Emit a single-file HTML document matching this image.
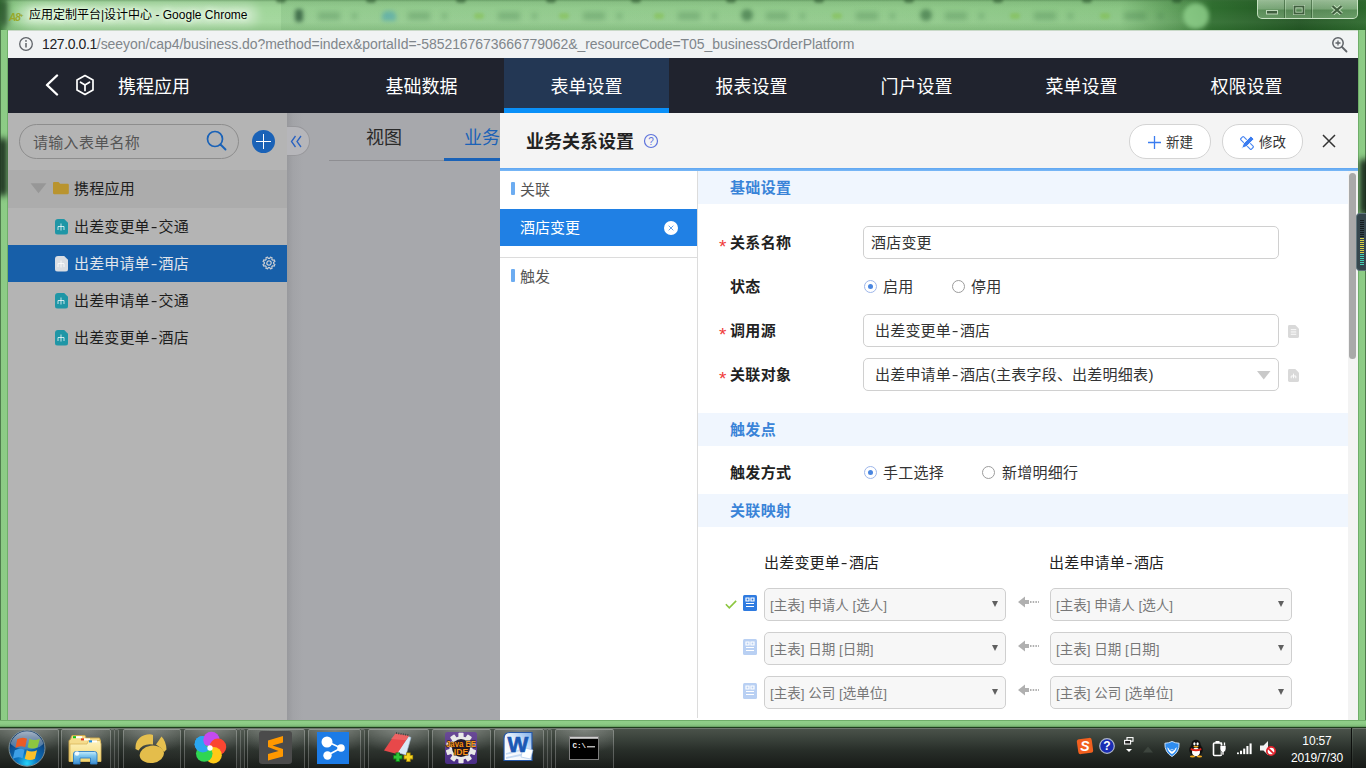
<!DOCTYPE html>
<html lang="zh-CN">
<head>
<meta charset="utf-8">
<title>应用定制平台|设计中心</title>
<style>
*{box-sizing:border-box;margin:0;padding:0}
html,body{width:1366px;height:768px;overflow:hidden}
body{position:relative;background:#8fcc88;font-family:"Liberation Sans","Noto Sans CJK SC",sans-serif;color:#222;font-size:14px}
.abs{position:absolute}
/* ---------- window frame ---------- */
#titlebar{left:0;top:0;width:1366px;height:30px;background:linear-gradient(180deg,rgba(60,110,60,.45) 0,rgba(60,110,60,.12) 2px,rgba(255,255,255,0) 8px,rgba(255,255,255,.06) 22px,rgba(40,90,40,.12) 30px),linear-gradient(90deg,#3f7a3d 0,#8cc986 8px,#a2d89c 40px,#a0d69a 260px,#98d091 900px,#90cb89 1120px,#5d9c59 1180px,#2f6e2f 1212px,#1f5220 1300px,#2c682c 1366px);overflow:hidden}
#titlebar .bl{position:absolute;filter:blur(2.500px);background:rgba(35,95,50,.24)}
#wc{left:1257px;top:0;width:101px;height:19px;border:1px solid rgba(215,240,210,.8);border-top:0;border-radius:0 0 5px 5px;background:linear-gradient(180deg,rgba(225,248,220,.6) 0,rgba(205,238,200,.5) 9px,rgba(160,205,155,.42) 10px,rgba(175,220,170,.45) 19px)}
#wc i{position:absolute;top:0;width:1px;height:18px;background:rgba(40,80,40,.55);box-shadow:1px 0 0 rgba(210,240,205,.4)}
#titlebar .ttl{left:29px;top:7px;font-size:12px;line-height:16px;color:#000;white-space:nowrap;text-shadow:0 0 6px #e8ffe5,0 0 6px #e8ffe5,0 0 3px #e8ffe5}
#frameL{left:0;top:30px;width:8px;height:698px;background:linear-gradient(90deg,#4f7c4d 0,#4f7c4d 1px,#8ccb85 1.500px,#8dcc86 6.500px,#6fae69 7px,#6fae69 8px)}
#frameR{left:1358px;top:30px;width:8px;height:698px;background:linear-gradient(90deg,#6fae69 0,#6fae69 1px,#8ccb85 1.500px,#8dcc86 6.500px,#4f7c4d 7px,#4f7c4d 8px)}
#frameB{left:0;top:720px;width:1366px;height:8px;background:linear-gradient(180deg,#6fae69 0,#6fae69 1px,#8fce88 1.500px,#8ccb85 4px,#7dba77 6px,#5a9256 7px,#1f3c1d 7.300px,#1f3c1d 8px)}
#urlbar{left:8px;top:30px;width:1350px;height:28px;background:#f1f3f4;border-top:1px solid #c9d9c8}
#urlbar .u{left:34px;top:5px;font-size:14px;line-height:16px;color:#80868b;white-space:nowrap;letter-spacing:-0.052px}
#urlbar .u b{font-weight:400;color:#202124;letter-spacing:-.4px}
/* ---------- app ---------- */
#nav{left:8px;top:58px;width:1350px;height:55px;background:#20232e;z-index:5}
#nav .it{top:0;height:55px;width:165px;text-align:center;color:#fff;font-size:18px;line-height:59px}
#nav .act{background:#233754;border-bottom:5px solid #0a90f8}
#app{left:8px;top:112px;width:1350px;height:608px;background:#a7a8ac;overflow:hidden}
#left{left:0;top:0;width:279px;height:608px;background:#b4b4b4}
#modal{left:492px;top:0;width:858px;height:608px;background:#fff}

/* left panel */
#search{left:11px;top:12px;width:220px;height:35px;border:1px solid #8d8d8d;border-radius:18px}
#search span{left:13px;top:9px;font-size:15px;line-height:18px;color:#555;white-space:nowrap;letter-spacing:.3px}
#plus{left:244px;top:18px;width:23px;height:23px;border-radius:12px;background:#1a62b7}
#plus:before{content:"";position:absolute;left:4.250px;top:10.800px;width:14.500px;height:1.400px;background:#fff}
#plus:after{content:"";position:absolute;left:10.800px;top:4.250px;width:1.400px;height:14.500px;background:#fff}
.trow{left:0;width:279px;height:37px;letter-spacing:.15px;font-size:15px;line-height:37px;color:#1d1d1d;white-space:nowrap}
.trow .tx{left:66px;top:0}
em{font-style:normal;display:inline-block;transform:scaleX(1.350);padding:0 2px 0 1.700px}
u{text-decoration:none;padding:0 .3px}
.trow .ic{left:46.500px;top:10.500px;width:13.500px;height:16px;border-radius:3px;background:#1f96a6;clip-path:polygon(0 0,68% 0,100% 26%,100% 100%,0 100%)}
.trow.sel{background:#175fa9;color:#e2e6ec}
.trow.sel .ic{background:#d9dde3}
#thead{left:0;top:58px;width:279px;height:38px;background:#acacac}
/* middle */
#mid{left:279px;top:0;width:213px;height:608px;background:linear-gradient(90deg,#98999d 0,#a2a3a7 6px,#a7a8ac 16px)}
#pill{left:0;top:14px;width:23px;height:30px;border:1px solid #97979b;border-left:0;border-radius:0 15px 15px 0;background:#b6b6ba;color:#2a62c0;font-size:19px;line-height:26px;text-indent:2px}
#tabs{left:42px;top:48px;width:171px;height:1px;background:#8e8e92}
#tabs i{position:absolute;left:115px;top:-2px;width:56px;height:3px;background:#1a62b7}
.tab{top:13px;font-size:18px;line-height:26px;color:#2a2a2a;white-space:nowrap}

/* modal */
#mhead{left:0;top:0;width:858px;height:57px;background:#f4f4f4;border-top:1px solid #e9e9e9}
#mhead .t{left:26px;top:15px;font-size:18px;font-weight:700;line-height:28px;color:#222;white-space:nowrap}
#mline{left:0;top:56px;width:858px;height:3px;background:linear-gradient(180deg,#5fa6f1,#7ab8f6)}
.btn{top:11px;height:35px;border:1px solid #d4d4d4;border-radius:17px;background:#fff;font-size:13.500px;line-height:35px;color:#333;white-space:nowrap}
#menu{left:0;top:59px;width:198px;height:547px;border-right:1px solid #dcdcdc;background:#fff}
.mi{left:0;width:197px;font-size:15px;color:#555;white-space:nowrap}
.mi i{position:absolute;left:11px;width:4px;height:13px;background:#6cacf1;border-radius:1px}
#msel{left:0;top:38px;width:197px;height:37px;background:#2080e4;color:#fff;font-size:15px;line-height:37px;padding-left:20px}
#cont{left:198px;top:59px;width:650px;height:549px;background:#fff;overflow:hidden}
.sec{left:0;width:650px;height:33px;background:#f0f6fe;color:#3a84d8;font-weight:700;font-size:15px;line-height:33px;padding-left:32px;letter-spacing:.35px}
.lb{left:32px;letter-spacing:.35px;font-size:15px;font-weight:700;line-height:20px;color:#222;white-space:nowrap}
.lb.req:before{content:"*";position:absolute;left:-11px;top:2px;color:#f03a3a;font-weight:400;font-size:19px;line-height:24px;letter-spacing:0}
.inp{letter-spacing:.2px;left:165px;width:416px;height:33px;border:1px solid #d0d0d0;border-radius:5px;background:#fff;font-size:15px;line-height:31px;color:#333;padding-left:11px;white-space:nowrap}
.rd{width:13px;height:13px;border:1px solid #9c9c9c;border-radius:50%;background:#fff}
.rd.on{border-color:#9db6ea}
.rd.on:after{content:"";position:absolute;left:3px;top:3px;width:5px;height:5px;border-radius:50%;background:#4a86e0}
.rt{letter-spacing:.25px;font-size:15px;line-height:20px;color:#333;white-space:nowrap}
.sel2{width:242px;height:33px;border:1px solid #cfcfcf;border-radius:5px;background:#f7f7f7;font-size:13.500px;line-height:33px;color:#777;padding-left:5px;white-space:nowrap}
.sel2:after{content:"";position:absolute;right:7px;top:12px;border:3.500px solid transparent;border-top:6px solid #606060;border-bottom:0}
.colh{letter-spacing:.2px;font-size:15px;line-height:20px;color:#222;white-space:nowrap}
#sbar{left:848px;top:59px;width:10px;height:549px;background:#f3f3f3}
#sbar i{position:absolute;left:1px;top:2px;width:7px;height:186px;border-radius:4px;background:#a9a9a9}
/* ---------- taskbar ---------- */
#taskbar{left:0;top:727px;width:1366px;height:41px;background:linear-gradient(180deg,#1f3c1d 0,#1f3c1d 1px,#6d766d 1px,#6d766d 2px,#4a524a 2px,#3a423b 12px,#272d28 24px,#171a17 41px)}

#taskbar .sp{position:absolute;top:1px;width:1px;height:40px;background:linear-gradient(180deg,#5d6a5e,#3a423b 50%,#222622)}
#taskbar .sd{position:absolute;top:1px;width:1px;height:40px;background:#0c0e0c}
#taskbar svg{position:absolute}
#clock{left:1286px;top:6px;letter-spacing:-.15px;width:62px;text-align:center;color:#fff;font-size:12px;line-height:17px;white-space:nowrap}

.fb{position:absolute;filter:blur(2.500px)}

#taskbar .tb{position:absolute;top:2px;height:40px;border:1px solid rgba(255,255,255,.24);border-top-color:rgba(255,255,255,.4);border-bottom:0;border-radius:2px 2px 0 0;background:radial-gradient(ellipse 70% 60% at 50% 0,rgba(255,255,255,.24),rgba(255,255,255,0)),linear-gradient(180deg,rgba(255,255,255,.08),rgba(255,255,255,.03) 50%,rgba(255,255,255,.01))}
#taskbar .ts{position:absolute;top:2px;height:40px;width:4px;border:1px solid rgba(255,255,255,.2);border-left:0;border-bottom:0;border-radius:0 2px 0 0;background:rgba(255,255,255,.05)}
</style>
</head>
<body>
<div id="titlebar" class="abs"><i class="abs" style="left:281px;top:0;width:920px;height:30px;background:linear-gradient(90deg,rgba(40,110,50,.10),rgba(40,110,50,.05))"></i><i class="bl" style="left:295px;top:9px;width:8px;height:13px;border-radius:3px;background:rgba(10,50,30,.6);filter:blur(2px)"></i><i class="bl" style="left:318px;top:12px;width:22px;height:8px;background:rgba(35,95,50,.22)"></i><i class="bl" style="left:352px;top:13px;width:5px;height:6px;background:rgba(35,95,50,.22)"></i><i class="bl" style="left:382px;top:11px;width:14px;height:10px;border-radius:5px 5px 2px 2px;background:rgba(50,150,190,.45);filter:blur(2px)"></i><i class="bl" style="left:408px;top:12px;width:22px;height:8px;background:rgba(35,95,50,.22)"></i><i class="bl" style="left:442px;top:13px;width:5px;height:6px;background:rgba(35,95,50,.22)"></i><i class="bl" style="left:474px;top:13px;width:10px;height:6px;border-radius:3px;background:rgba(120,185,30,.32);filter:blur(1.800px)"></i><i class="bl" style="left:498px;top:12px;width:22px;height:8px;background:rgba(35,95,50,.22)"></i><i class="bl" style="left:532px;top:13px;width:5px;height:6px;background:rgba(35,95,50,.22)"></i><i class="bl" style="left:559px;top:13px;width:10px;height:6px;border-radius:3px;background:rgba(120,185,30,.32);filter:blur(1.800px)"></i><i class="bl" style="left:583px;top:12px;width:22px;height:8px;background:rgba(35,95,50,.22)"></i><i class="bl" style="left:617px;top:13px;width:5px;height:6px;background:rgba(35,95,50,.22)"></i><i class="bl" style="left:654px;top:13px;width:10px;height:6px;border-radius:3px;background:rgba(120,185,30,.32);filter:blur(1.800px)"></i><i class="bl" style="left:678px;top:12px;width:22px;height:8px;background:rgba(35,95,50,.22)"></i><i class="bl" style="left:712px;top:13px;width:5px;height:6px;background:rgba(35,95,50,.22)"></i><i class="bl" style="left:741px;top:9px;width:12px;height:12px;border-radius:6px;background:rgba(20,70,35,.45);filter:blur(2px)"></i><i class="bl" style="left:766px;top:12px;width:22px;height:8px;background:rgba(35,95,50,.22)"></i><i class="bl" style="left:800px;top:13px;width:5px;height:6px;background:rgba(35,95,50,.22)"></i><i class="bl" style="left:832px;top:13px;width:10px;height:6px;border-radius:3px;background:rgba(120,185,30,.32);filter:blur(1.800px)"></i><i class="bl" style="left:856px;top:12px;width:22px;height:8px;background:rgba(35,95,50,.22)"></i><i class="bl" style="left:890px;top:13px;width:5px;height:6px;background:rgba(35,95,50,.22)"></i><i class="bl" style="left:920px;top:9px;width:12px;height:12px;border-radius:6px;background:rgba(20,70,35,.45);filter:blur(2px)"></i><i class="bl" style="left:945px;top:12px;width:22px;height:8px;background:rgba(35,95,50,.22)"></i><i class="bl" style="left:979px;top:13px;width:5px;height:6px;background:rgba(35,95,50,.22)"></i><i class="bl" style="left:1010px;top:13px;width:10px;height:6px;border-radius:3px;background:rgba(120,185,30,.32);filter:blur(1.800px)"></i><i class="bl" style="left:1034px;top:12px;width:22px;height:8px;background:rgba(35,95,50,.22)"></i><i class="bl" style="left:1068px;top:13px;width:5px;height:6px;background:rgba(35,95,50,.22)"></i><i class="bl" style="left:1100px;top:13px;width:10px;height:6px;border-radius:3px;background:rgba(120,185,30,.32);filter:blur(1.800px)"></i><i class="bl" style="left:1124px;top:12px;width:22px;height:8px;background:rgba(35,95,50,.22)"></i><i class="bl" style="left:1158px;top:13px;width:5px;height:6px;background:rgba(35,95,50,.22)"></i><i class="bl" style="left:276px;top:-4px;width:10px;height:7px;border-radius:4px;background:rgba(15,50,20,.42);filter:blur(1.800px)"></i><i class="bl" style="left:366px;top:-4px;width:10px;height:7px;border-radius:4px;background:rgba(15,50,20,.42);filter:blur(1.800px)"></i><i class="bl" style="left:456px;top:-4px;width:10px;height:7px;border-radius:4px;background:rgba(15,50,20,.42);filter:blur(1.800px)"></i><i class="bl" style="left:546px;top:-4px;width:10px;height:7px;border-radius:4px;background:rgba(15,50,20,.42);filter:blur(1.800px)"></i><i class="bl" style="left:631px;top:-4px;width:10px;height:7px;border-radius:4px;background:rgba(15,50,20,.42);filter:blur(1.800px)"></i><i class="bl" style="left:726px;top:-4px;width:10px;height:7px;border-radius:4px;background:rgba(15,50,20,.42);filter:blur(1.800px)"></i><i class="bl" style="left:814px;top:-4px;width:10px;height:7px;border-radius:4px;background:rgba(15,50,20,.42);filter:blur(1.800px)"></i><i class="bl" style="left:904px;top:-4px;width:10px;height:7px;border-radius:4px;background:rgba(15,50,20,.42);filter:blur(1.800px)"></i><i class="bl" style="left:993px;top:-4px;width:10px;height:7px;border-radius:4px;background:rgba(15,50,20,.42);filter:blur(1.800px)"></i><i class="bl" style="left:1082px;top:-4px;width:10px;height:7px;border-radius:4px;background:rgba(15,50,20,.42);filter:blur(1.800px)"></i><i class="bl" style="left:1172px;top:-4px;width:10px;height:7px;border-radius:4px;background:rgba(15,50,20,.42);filter:blur(1.800px)"></i><i class="bl" style="left:1183px;top:3px;width:26px;height:26px;border-radius:13px;background:rgba(150,215,145,.75);filter:blur(2px)"></i><i class="bl" style="left:0;top:0;width:8px;height:26px;background:rgba(10,40,15,.6);filter:blur(3px)"></i><i class="abs" style="left:18px;top:5px;width:240px;height:20px;border-radius:10px;background:rgba(255,255,255,.38);filter:blur(5px)"></i><div id="wc" class="abs"><i style="left:26px"></i><i style="left:53px"></i>
<svg class="abs" style="left:8px;top:10px" width="12" height="5" viewBox="0 0 12 5"><rect x=".5" y=".5" width="11" height="3.500" fill="#3f5f3e" stroke="#cfe8ca" stroke-opacity=".85"/></svg>
<svg class="abs" style="left:35px;top:5px" width="12" height="10" viewBox="0 0 12 10"><rect x="1.500" y="1.500" width="9" height="7" fill="none" stroke="#cfe8ca" stroke-opacity=".85" stroke-width="3.400"/><rect x="1.500" y="1.500" width="9" height="7" fill="none" stroke="#3f5f3e" stroke-width="1.800"/></svg>
<svg class="abs" style="left:73px;top:5px" width="12" height="10" viewBox="0 0 12 10"><path d="M1.500 1l9 8M10.500 1l-9 8" stroke="#cfe8ca" stroke-opacity=".85" stroke-width="4"/><path d="M1.500 1l9 8M10.500 1l-9 8" stroke="#3f5f3e" stroke-width="2.200"/></svg>
</div><span class="abs" style="left:9px;top:9px;font-size:10px;line-height:12px;font-style:italic;font-weight:700;color:#9aa82a;letter-spacing:-1px">A8<sup style="font-size:6px">+</sup></span><div class="ttl abs">应用定制平台|设计中心 - Google Chrome</div></div>
<div id="frameL" class="abs" style="overflow:hidden"><i class="fb" style="left:-2px;top:108px;width:9px;height:58px;background:#16281a;border-radius:4px;filter:blur(3px)"></i></div>
<div id="frameR" class="abs" style="overflow:hidden"><i class="fb" style="left:2px;top:129px;width:9px;height:56px;background:#122016;border-radius:4px;filter:blur(3px)"></i></div>
<div id="widget" class="abs" style="left:1356px;top:213px;width:10px;height:58px;background:#35464d;border:1px solid #60757c;border-right:0;border-radius:4px 0 0 4px;z-index:9"><i class="abs" style="left:3px;top:6px;width:4px;height:17px;background:repeating-linear-gradient(180deg,#141c1e 0,#141c1e 1px,#35464d 1px,#35464d 2px)"></i><i class="abs" style="left:3px;top:24px;width:4px;height:15px;background:repeating-linear-gradient(180deg,#d5cf48 0,#d5cf48 1px,#35464d 1px,#35464d 2px)"></i><i class="abs" style="left:3px;top:40px;width:4px;height:12px;background:repeating-linear-gradient(180deg,#46d0b4 0,#46d0b4 1px,#35464d 1px,#35464d 2px)"></i></div>
<div id="urlbar" class="abs"><svg class="abs" style="left:10px;top:5px" width="16" height="16" viewBox="0 0 16 16"><circle cx="8" cy="8" r="6.300" fill="none" stroke="#5f6368" stroke-width="1.300"/><path d="M8 7v4.500" stroke="#5f6368" stroke-width="1.500"/><circle cx="8" cy="4.900" r=".9" fill="#5f6368"/></svg>
<svg class="abs" style="left:1323px;top:5px" width="17" height="17" viewBox="0 0 17 17"><circle cx="7" cy="7" r="5.200" fill="none" stroke="#5f6368" stroke-width="1.500"/><path d="M7 4.500v5M4.500 7h5" stroke="#5f6368" stroke-width="1.300"/><path d="M11 11l4.500 4.500" stroke="#5f6368" stroke-width="1.800" stroke-linecap="round"/></svg><div class="u abs"><b>127.0.0.1</b>/seeyon/cap4/business.do?method=index&amp;portalId=-5852167673666779062&amp;_resourceCode=T05_businessOrderPlatform</div></div>
<div id="nav" class="abs">
  <svg class="abs" style="left:36px;top:16px" width="16" height="22" viewBox="0 0 16 22"><path d="M13 1.500L3 11l10 9.500" fill="none" stroke="#fff" stroke-width="2.400" stroke-linejoin="round" stroke-linecap="round"/></svg>
  <svg class="abs" style="left:67px;top:16px" width="20" height="22" viewBox="0 0 20 22"><path d="M10 1.500l8 4.600v9.800l-8 4.600-8-4.600V6.100z" fill="none" stroke="#fff" stroke-width="1.700" stroke-linejoin="round"/><path d="M5.500 8.200l4.500 2.800 4.500-2.800M10 11v5.500" fill="none" stroke="#fff" stroke-width="1.700" stroke-linecap="round"/></svg>
  <div class="it abs" style="left:20px;width:250px;text-align:left;padding-left:90px">携程应用</div>
  <div class="it abs" style="left:331px">基础数据</div>
  <div class="it abs act" style="left:496px">表单设置</div>
  <div class="it abs" style="left:661px">报表设置</div>
  <div class="it abs" style="left:826px">门户设置</div>
  <div class="it abs" style="left:991px">菜单设置</div>
  <div class="it abs" style="left:1156px">权限设置</div>
</div>
<div id="app" class="abs">
  <div id="left" class="abs">
    <div id="search" class="abs"><span class="abs">请输入表单名称</span>
      <svg class="abs" style="left:185px;top:3.500px" width="24" height="24" viewBox="0 0 24 24"><circle cx="10" cy="10" r="7.5" fill="none" stroke="#1a62b7" stroke-width="1.7"/><path d="M15.5 15.5L20.5 20.5" stroke="#1a62b7" stroke-width="1.9" stroke-linecap="round"/></svg>
    </div>
    <div id="plus" class="abs"></div>
    <div id="thead" class="abs">
      <svg class="abs" style="left:22px;top:12px" width="17" height="13" viewBox="0 0 16 12"><path d="M0.5 1h15L8 10.5z" fill="#979797"/></svg>
      <svg class="abs" style="left:45px;top:11px" width="16" height="14" viewBox="0 0 16 14"><path d="M0 2.2C0 1.5.5 1 1.2 1h4.3l1.6 1.8h7.5c.7 0 1.2.5 1.2 1.2v8c0 .7-.5 1.2-1.2 1.2H1.200C.5 13.200 0 12.700 0 12z" fill="#b9942f"/></svg>
      <span class="abs" style="left:66px;top:0;font-size:15px;line-height:38px;color:#1d1d1d;letter-spacing:.25px;white-space:nowrap">携程应用</span>
    </div>
    <div class="trow abs" style="top:96px"><i class="ic abs"><svg class="abs" style="left:2.800px;top:4.500px" width="8" height="8" viewBox="0 0 8 8"><path d="M4 0.500v7M1 7V3.500h6V7" fill="none" stroke="#fff" stroke-opacity=".75" stroke-width="1"/></svg></i><span class="tx abs">出差变更单<em>-</em>交通</span></div>
    <div class="trow abs sel" style="top:133px"><i class="ic abs"><svg class="abs" style="left:2.800px;top:4.500px" width="8" height="8" viewBox="0 0 8 8"><path d="M4 0.500v7M1 7V3.500h6V7" fill="none" stroke="#fff" stroke-opacity=".75" stroke-width="1"/></svg></i><span class="tx abs">出差申请单<em>-</em>酒店</span>
      <svg class="abs" style="left:253.500px;top:10.500px" width="14" height="14" viewBox="0 0 15 15" transform="rotate(22.500)"><path d="M6.33 2.64L6.57 0.97L8.43 0.97L8.67 2.64L10.11 3.24L11.46 2.22L12.78 3.54L11.76 4.89L12.36 6.33L14.03 6.57L14.03 8.43L12.36 8.67L11.76 10.11L12.78 11.46L11.46 12.78L10.11 11.76L8.67 12.36L8.43 14.03L6.57 14.03L6.33 12.36L4.89 11.76L3.54 12.78L2.22 11.46L3.24 10.11L2.64 8.67L0.97 8.43L0.97 6.57L2.64 6.33L3.24 4.89L2.22 3.54L3.54 2.22L4.89 3.24z" fill="none" stroke="#c9cdd3" stroke-width="1.250" stroke-linejoin="round"/><circle cx="7.500" cy="7.500" r="2.300" fill="none" stroke="#c9cdd3" stroke-width="1.250"/></svg>
    </div>
    <div class="trow abs" style="top:170px"><i class="ic abs"><svg class="abs" style="left:2.800px;top:4.500px" width="8" height="8" viewBox="0 0 8 8"><path d="M4 0.500v7M1 7V3.500h6V7" fill="none" stroke="#fff" stroke-opacity=".75" stroke-width="1"/></svg></i><span class="tx abs">出差申请单<em>-</em>交通</span></div>
    <div class="trow abs" style="top:207px"><i class="ic abs"><svg class="abs" style="left:2.800px;top:4.500px" width="8" height="8" viewBox="0 0 8 8"><path d="M4 0.500v7M1 7V3.500h6V7" fill="none" stroke="#fff" stroke-opacity=".75" stroke-width="1"/></svg></i><span class="tx abs">出差变更单<em>-</em>酒店</span></div>
  </div>
  <div id="mid" class="abs">
    <div id="pill" class="abs"><svg class="abs" style="left:3px;top:8px" width="13" height="13" viewBox="0 0 13 13"><path d="M5.500 1L1.500 6.500l4 5.500M11 1L7 6.500l4 5.500" fill="none" stroke="#2a62c0" stroke-width="1.300"/></svg></div>
    <div class="tab abs" style="left:79px">视图</div>
    <div class="tab abs" style="left:177px;color:#1a62b7">业务</div>
    <div id="tabs" class="abs"><i></i></div>
  </div>
  <div id="modal" class="abs">
    <div id="mhead" class="abs"><div class="t abs">业务关系设置</div>
      <svg class="abs" style="left:143px;top:20px" width="16" height="16" viewBox="0 0 16 16"><circle cx="8" cy="8" r="6.500" fill="none" stroke="#5d73dc" stroke-width="1.200"/><text x="8" y="11.500" font-size="10" font-family="Liberation Sans,sans-serif" fill="#5d73dc" text-anchor="middle">?</text></svg>
      <div class="btn abs" style="left:629px;width:82px;padding-left:36px">新建<svg class="abs" style="left:18px;top:11px" width="13" height="13" viewBox="0 0 13 13"><path d="M6.500 0v13M0 6.500h13" stroke="#3a7cf0" stroke-width="1.300"/></svg></div>
      <div class="btn abs" style="left:722px;width:81px;padding-left:36px">修改<svg class="abs" style="left:17px;top:10.500px" width="14" height="14" viewBox="0 0 15 15"><rect x="-2.200" y="-8" width="4.400" height="16" rx="1" transform="translate(7.500 7.500) rotate(-45)" fill="none" stroke="#4a86f0" stroke-width="1.200"/><path d="M-2.400 -8.300h4.800v11.300L0 8.300-2.400 3z" transform="translate(7.500 7.500) rotate(45)" fill="#3a7cf0" stroke="#fff" stroke-width="1"/></svg></div>
      <svg class="abs" style="left:822px;top:21px" width="14" height="14" viewBox="0 0 14 14"><path d="M1 1l12 12M13 1L1 13" stroke="#333" stroke-width="1.500"/></svg>
    </div>
    <div id="mline" class="abs"></div>
    <div id="menu" class="abs">
      <div class="mi abs" style="top:0;height:38px;line-height:37px;padding-left:20px"><i style="top:11px"></i>关联</div>
      <div id="msel" class="abs">酒店变更<svg class="abs" style="left:163.500px;top:11.500px" width="14" height="14" viewBox="0 0 15 15"><circle cx="7.500" cy="7.500" r="7.500" fill="#fff"/><path d="M5 5l5 5M10 5l-5 5" stroke="#5a9ae6" stroke-width="1"/></svg></div>
      <div class="abs" style="left:0;top:86px;width:197px;height:1px;background:#dcdcdc"></div>
      <div class="mi abs" style="top:87px;height:38px;line-height:37px;padding-left:20px"><i style="top:11px"></i>触发</div>
    </div>
    <div id="cont" class="abs">
      <div class="sec abs" style="top:0">基础设置</div>
      <div class="lb req abs" style="top:62px">关系名称</div>
      <div class="inp abs" style="top:55px;padding-left:7px">酒店变更</div>
      <div class="lb abs" style="top:106px">状态</div>
      <i class="rd on abs" style="left:166px;top:109px"></i><span class="rt abs" style="left:185px;top:106px">启用</span>
      <i class="rd abs" style="left:254px;top:109px"></i><span class="rt abs" style="left:273px;top:106px">停用</span>
      <div class="lb req abs" style="top:150px">调用源</div>
      <div class="inp abs" style="top:143px">出差变更单<em>-</em>酒店</div>
      <div class="lb req abs" style="top:194px">关联对象</div>
      <div class="inp abs" style="top:187px">出差申请单<em>-</em>酒店<u>(</u>主表字段、出差明细表<u>)</u><svg class="abs" style="left:393px;top:12px" width="13.500" height="8.500" viewBox="0 0 16 10"><path d="M0 0h16L8 10z" fill="#c9c9c9"/></svg></div>
      <svg class="abs" style="left:589.500px;top:153.500px" width="11" height="13" viewBox="0 0 12 14"><path d="M0 1.500Q0 0 1.500 0H8l4 4v8.500q0 1.500-1.500 1.500h-9Q0 14 0 12.500z" fill="#d9d9d9"/><path d="M3 5h6M3 7.500h6M3 10h6" stroke="#fff" stroke-width="1"/></svg>
      <svg class="abs" style="left:589.500px;top:197.500px" width="11" height="13" viewBox="0 0 12 14"><path d="M0 1.500Q0 0 1.500 0H8l4 4v8.500q0 1.500-1.500 1.500h-9Q0 14 0 12.500z" fill="#d9d9d9"/><path d="M6 5v5M3.500 10V7.500h5V10" fill="none" stroke="#fff" stroke-width="1"/></svg>
      <div class="sec abs" style="top:242px">触发点</div>
      <div class="lb abs" style="top:292px">触发方式</div>
      <i class="rd on abs" style="left:166px;top:295px"></i><span class="rt abs" style="left:185px;top:292px">手工选择</span>
      <i class="rd abs" style="left:284px;top:295px"></i><span class="rt abs" style="left:304px;top:292px">新增明细行</span>
      <div class="sec abs" style="top:323px">关联映射</div>
      <div class="colh abs" style="left:66px;top:382px">出差变更单<em>-</em>酒店</div>
      <div class="colh abs" style="left:351px;top:382px">出差申请单<em>-</em>酒店</div>
      <svg class="abs" style="left:27px;top:429px" width="12" height="8.600" viewBox="0 0 14 10"><path d="M1 5l4 4 8-8" fill="none" stroke="#8cc63f" stroke-width="1.900"/></svg>
      <svg class="abs" style="left:45px;top:424px" width="14" height="16" viewBox="0 0 14 16"><rect width="14" height="16" rx="1.500" fill="#2f7be0"/><path d="M3 3h3v3H3zM8 3h3v3H8zM3 8.500h8M3 11.500h8" fill="none" stroke="#fff" stroke-width="1.200"/></svg>
      <div class="sel2 abs" style="left:66px;top:417px">[主表] 申请人 [选人]</div>
      <svg class="abs" style="left:320px;top:425px" width="22" height="12" viewBox="0 0 22 12"><path d="M0 6l7-5.500v3.500h4v4H7v3.500z" fill="#b0b0b0"/><path d="M12 6h9" stroke="#b0b0b0" stroke-width="2" stroke-dasharray="1.500 1.200"/></svg>
      <div class="sel2 abs" style="left:352px;top:417px">[主表] 申请人 [选人]</div>
      
      <svg class="abs" style="left:45px;top:468px" width="14" height="16" viewBox="0 0 14 16"><rect width="14" height="16" rx="1.500" fill="#b9d0f3"/><path d="M3 3h3v3H3zM8 3h3v3H8zM3 8.500h8M3 11.500h8" fill="none" stroke="#fff" stroke-width="1.200"/></svg>
      <div class="sel2 abs" style="left:66px;top:461px">[主表] 日期 [日期]</div>
      <svg class="abs" style="left:320px;top:469px" width="22" height="12" viewBox="0 0 22 12"><path d="M0 6l7-5.500v3.500h4v4H7v3.500z" fill="#b0b0b0"/><path d="M12 6h9" stroke="#b0b0b0" stroke-width="2" stroke-dasharray="1.500 1.200"/></svg>
      <div class="sel2 abs" style="left:352px;top:461px">[主表] 日期 [日期]</div>
      
      <svg class="abs" style="left:45px;top:512px" width="14" height="16" viewBox="0 0 14 16"><rect width="14" height="16" rx="1.500" fill="#b9d0f3"/><path d="M3 3h3v3H3zM8 3h3v3H8zM3 8.500h8M3 11.500h8" fill="none" stroke="#fff" stroke-width="1.200"/></svg>
      <div class="sel2 abs" style="left:66px;top:505px">[主表] 公司 [选单位]</div>
      <svg class="abs" style="left:320px;top:513px" width="22" height="12" viewBox="0 0 22 12"><path d="M0 6l7-5.500v3.500h4v4H7v3.500z" fill="#b0b0b0"/><path d="M12 6h9" stroke="#b0b0b0" stroke-width="2" stroke-dasharray="1.500 1.200"/></svg>
      <div class="sel2 abs" style="left:352px;top:505px">[主表] 公司 [选单位]</div>
    </div>
    <div id="sbar" class="abs"><i></i></div>
  </div>
</div>
<div id="frameB" class="abs"></div>
<div id="taskbar" class="abs"><i class="tb" style="left:-2px;width:61px"></i><i class="tb" style="left:61px;width:50px"></i><i class="ts" style="left:111px"></i><i class="ts" style="left:115px"></i><i class="tb" style="left:123px;width:58px"></i><i class="tb" style="left:184px;width:53px"></i><i class="ts" style="left:237px"></i><i class="ts" style="left:241px"></i><i class="tb" style="left:247px;width:58px"></i><i class="tb" style="left:308px;width:53px"></i><i class="ts" style="left:361px"></i><i class="tb" style="left:368px;width:61px"></i><i class="tb" style="left:432px;width:59px"></i><i class="tb" style="left:494px;width:50px"></i><i class="ts" style="left:544px"></i><i class="ts" style="left:548px"></i><i class="tb" style="left:555px;width:59px"></i>
<!-- start orb -->
<svg style="left:6px;top:0" width="42" height="41" viewBox="0 0 42 41"><defs><radialGradient id="orb" cx="50%" cy="92%" r="75%"><stop offset="0" stop-color="#25d4fa"/><stop offset=".38" stop-color="#0b72bd"/><stop offset=".8" stop-color="#0c4f90"/><stop offset="1" stop-color="#0a3566"/></radialGradient><linearGradient id="orbg" x1="0" y1="0" x2="0" y2="1"><stop offset="0" stop-color="#fff" stop-opacity=".75"/><stop offset="1" stop-color="#fff" stop-opacity=".18"/></linearGradient><clipPath id="orbc"><circle cx="21" cy="21.200" r="17"/></clipPath></defs><circle cx="21" cy="21.200" r="18" fill="url(#orb)" stroke="#7d8f96" stroke-width="1"/><ellipse cx="21" cy="11" rx="19" ry="11.500" fill="url(#orbg)" clip-path="url(#orbc)"/><g transform="translate(21 21.500) scale(1.220) translate(-20 -20.500)"><path d="M12 13q4-2.500 8-.5l-1.500 7q-4-2-8 .5z" fill="#ea5b25"/><path d="M22 12.500q4 2 8.500 0l-1.800 7q-4 2-8.200 0z" fill="#8dc63f"/><path d="M10 22q4-2.500 8-.5l-1.600 7q-4-2-8 .5z" fill="#3d9fe6"/><path d="M19.800 22q4 2 8.400 0l-1.700 7q-4 2-8.300 0z" fill="#fbc02a"/></g></svg>
<!-- explorer -->
<svg style="left:67px;top:4px" width="36" height="34" viewBox="0 0 36 34"><defs><linearGradient id="fo" x1="0" y1="0" x2="0" y2="1"><stop offset="0" stop-color="#fdf3c0"/><stop offset="1" stop-color="#f3d66f"/></linearGradient><linearGradient id="rk" x1="0" y1="0" x2="0" y2="1"><stop offset="0" stop-color="#c8ecfb"/><stop offset=".35" stop-color="#7cc6ee"/><stop offset="1" stop-color="#3f8fd2"/></linearGradient></defs><path d="M3.500 8.500l1.500-4h13l1 2.500h13.500l1 3v20.500h-31.500v-21z" fill="#f5dc8c" stroke="#cfa94a" stroke-width=".9"/><rect x="6" y="5.200" width="3" height="2" fill="#13c316"/><rect x="9" y="5.200" width="6" height="2" fill="#fff"/><rect x="14" y="7.400" width="3" height="2" fill="#dd3a22"/><rect x="17" y="7.400" width="6" height="2" fill="#fff"/><path d="M3 13h17l1.500-3.500h11.500l1 3.500v17.500H3z" fill="url(#fo)" stroke="#d8b55a" stroke-width=".8"/><rect x="22" y="9.400" width="3" height="2" fill="#1b8ee8"/><rect x="25" y="9.400" width="5" height="2" fill="#fff"/><path d="M6.500 33V23q0-2.500 2.500-2.500h18.500q2.500 0 2.500 2.500v10h-6.500v-6H13v6z" fill="url(#rk)" stroke="#2f7fc4" stroke-width=".9"/><circle cx="10" cy="22.500" r="2.200" fill="#fff" fill-opacity=".85"/></svg>
<!-- navicat -->
<svg style="left:133px;top:5px" width="36" height="32" viewBox="0 0 36 32"><path d="M2.500 17Q2 5 14 2.500q4-.8 6 .5v9.500Q10 11 5.500 18.500z" fill="#e6c04f"/><path d="M23 12.500L28.500 4.500Q33 9 33.500 17.500l-2.500 2.500Q28 15 23 12.500z" fill="#e6c04f"/><ellipse cx="18.800" cy="22.300" rx="12.200" ry="8.700" transform="rotate(-8 18.800 22.300)" fill="#e4bd4b"/></svg>
<!-- pinwheel -->
<svg style="left:193px;top:4px" width="34" height="34" viewBox="0 0 34 34"><defs><clipPath id="pwc"><path clip-rule="evenodd" d="M-20 -20h40v40h-40zM-6.91 -7.88a8.3 8.3 0 1 0 16.6 0a8.3 8.3 0 1 0 -16.6 0z"/></clipPath></defs><g transform="translate(17 17)"><circle cx="-7.06" cy="-3.76" r="8.3" fill="#2aa6f0"/><circle cx="1.39" cy="-7.88" r="8.3" fill="#c44af0"/><circle cx="7.92" cy="-1.11" r="8.3" fill="#fb4632"/><circle cx="3.51" cy="7.19" r="8.3" fill="#ffc917"/><circle cx="-5.75" cy="5.56" r="8.3" fill="#2fd652"/><circle cx="-7.06" cy="-3.76" r="8.3" fill="#2aa6f0" clip-path="url(#pwc)"/><circle r="2.700" fill="#fff"/></g></svg>
<!-- sublime -->
<svg style="left:259px;top:4px" width="33" height="33" viewBox="0 0 33 33"><rect width="33" height="33" rx="3" fill="#4b4b4b"/><path d="M9 9.500l15-4.500v6.500L13.500 14.500 24 18v7.500L9 29.500V23l10.500-3L9 16z" fill="#ff9800"/></svg>
<!-- blue share -->
<svg style="left:317px;top:5px" width="32" height="32" viewBox="0 0 32 32"><rect width="32" height="32" fill="#1c7be6"/><path d="M11 10l13 6-13 7" stroke="#fff" stroke-width="1.600" fill="none"/><circle cx="10" cy="10" r="5.500" fill="#fff"/><circle cx="24" cy="16" r="3.800" fill="#fff"/><circle cx="10.500" cy="23.500" r="4.200" fill="#fff"/></svg>
<!-- notepad -->
<svg style="left:382px;top:3px" width="34" height="34" viewBox="0 0 34 34"><path d="M26.500 6.500l2.500 1L24 25l-9-2.500z" fill="#d9e9f6" stroke="#9db6cf" stroke-width=".6"/><path d="M13.500 3.500l13.500 2.200L15 24 2 20.500z" fill="#e8484a"/><path d="M13.500 3.500l13.500 2.200-3 4.500L9 9z" fill="#f07a78" fill-opacity=".55"/><path d="M14 3l13 2.200" stroke="#444" stroke-width="1.800" stroke-dasharray="1 1.300"/><path d="M15.800 22.500v9.400M11.100 27.200h9.400" stroke="#0b7a12" stroke-width="4.400"/><path d="M15.800 23.300v7.800M11.900 27.200h7.800" stroke="#2fc437" stroke-width="2.800"/><path d="M26.400 22.500v9.400M21.700 27.200h9.400" stroke="#a88a08" stroke-width="4.400"/><path d="M26.400 23.300v7.800M22.500 27.200h7.800" stroke="#f5d522" stroke-width="2.800"/></svg>
<!-- java ee -->
<svg style="left:445px;top:5px" width="32" height="32" viewBox="0 0 32 32"><defs><linearGradient id="jv" x1="0" y1="0" x2="0" y2="1"><stop offset="0" stop-color="#6a4a96"/><stop offset="1" stop-color="#4a2d86"/></linearGradient></defs><rect width="32" height="32" rx="2.500" fill="url(#jv)"/><g transform="translate(16 16)"><rect x="-2.600" y="-15.200" width="5.200" height="6" rx=".8" transform="rotate(0)" fill="#e9e9e9"/><rect x="-2.600" y="-15.200" width="5.200" height="6" rx=".8" transform="rotate(36)" fill="#e9e9e9"/><rect x="-2.600" y="-15.200" width="5.200" height="6" rx=".8" transform="rotate(72)" fill="#e9e9e9"/><rect x="-2.600" y="-15.200" width="5.200" height="6" rx=".8" transform="rotate(108)" fill="#e9e9e9"/><rect x="-2.600" y="-15.200" width="5.200" height="6" rx=".8" transform="rotate(144)" fill="#e9e9e9"/><rect x="-2.600" y="-15.200" width="5.200" height="6" rx=".8" transform="rotate(180)" fill="#e9e9e9"/><rect x="-2.600" y="-15.200" width="5.200" height="6" rx=".8" transform="rotate(216)" fill="#e9e9e9"/><rect x="-2.600" y="-15.200" width="5.200" height="6" rx=".8" transform="rotate(252)" fill="#e9e9e9"/><rect x="-2.600" y="-15.200" width="5.200" height="6" rx=".8" transform="rotate(288)" fill="#e9e9e9"/><rect x="-2.600" y="-15.200" width="5.200" height="6" rx=".8" transform="rotate(324)" fill="#e9e9e9"/><circle r="11.500" fill="#e9e9e9"/><circle r="9" fill="#1f1a33"/></g><text x="16" y="14.800" font-family="Liberation Sans,sans-serif" font-size="8.300" font-weight="700" fill="#f7931e" stroke="#2a1500" stroke-width=".9" paint-order="stroke" text-anchor="middle" textLength="30" lengthAdjust="spacingAndGlyphs">Java EE</text><text x="16" y="23.300" font-family="Liberation Sans,sans-serif" font-size="8.600" font-weight="700" fill="#f7931e" stroke="#2a1500" stroke-width=".9" paint-order="stroke" text-anchor="middle">IDE</text></svg>
<!-- word -->
<svg style="left:502px;top:4px" width="33" height="33" viewBox="0 0 33 33"><defs><linearGradient id="wd" x1="0" y1="1" x2="1" y2="0"><stop offset="0" stop-color="#fff"/><stop offset=".5" stop-color="#eef4fc"/><stop offset="1" stop-color="#7fb0ea"/></linearGradient></defs><path d="M2 29.500V7.500Q2 1.500 8 1.500h22v28z" fill="url(#wd)" stroke="#2457a8" stroke-width="1.200"/><path d="M4 23l22-6M4 27l24-5" stroke="#c4d8f2" stroke-width="1.800"/><path d="M21 16.500l10 2.500-2.500 9-9.500-2z" fill="#fff" stroke="#9dbde6" stroke-width=".6"/><text x="16" y="20.500" font-family="Liberation Sans,sans-serif" font-size="22" font-weight="700" fill="#1a58b4" stroke="#1a58b4" stroke-width=".7" text-anchor="middle">W</text></svg>
<!-- cmd -->
<svg style="left:569px;top:9px" width="30" height="24" viewBox="0 0 30 24"><rect x=".5" y=".5" width="29" height="23" fill="#000" stroke="#7d7d7d" stroke-width="1"/><rect x="1" y="1" width="28" height="1.800" fill="#cfcfcf"/><text x="3.500" y="11.500" font-family="Liberation Mono,monospace" font-size="7.500" font-weight="700" fill="#f2f2f2">C:\</text><path d="M18 10.800h8" stroke="#f2f2f2" stroke-width="1.100"/></svg>

<!-- sogou -->
<svg style="left:1076px;top:10px" width="18" height="18" viewBox="0 0 18 18"><rect x="1.500" y="1.500" width="15" height="15" rx="2.500" fill="#f2601f" transform="rotate(-8 9 9)"/><text x="9" y="14" font-family="Liberation Sans,sans-serif" font-size="14" font-weight="700" font-style="italic" fill="#fff" text-anchor="middle">S</text></svg>
<!-- help -->
<svg style="left:1099px;top:11px" width="16" height="16" viewBox="0 0 16 16"><circle cx="8" cy="8" r="7.300" fill="#1a2db4" stroke="#aeb6c8" stroke-width="1.200"/><text x="8" y="12.300" font-family="Liberation Sans,sans-serif" font-size="12" font-weight="700" fill="#fff" text-anchor="middle">?</text></svg>
<!-- flag -->
<svg style="left:1124px;top:10px" width="10" height="16" viewBox="0 0 10 16"><rect x="3" y=".6" width="6" height="3.600" fill="none" stroke="#fff" stroke-width="1.100"/><rect x=".6" y="3.400" width="6" height="3.600" fill="#222" stroke="#fff" stroke-width="1.100"/><path d="M2 12h6l-3 3z" fill="#fff"/></svg>
<svg style="left:1143px;top:19px" width="10" height="7" viewBox="0 0 10 7"><path d="M0 6.500L5 .5l5 6z" fill="#3d453e"/></svg>
<!-- shield -->
<svg style="left:1164px;top:14px" width="16" height="16" viewBox="0 0 18 18"><path d="M9 .5q4 2 8 2 .5 10-8 15Q.5 12.500 1 2.500q4 0 8-2z" fill="#2f8df0" stroke="#dcecff" stroke-width="1"/><path d="M3.500 7q5.500 5 11 0-1.500 6-5.500 7.500-4-1.500-5.500-7.500z" fill="#fff"/><path d="M5.500 8.500l3.500 2.800 3.500-2.800" stroke="#2f8df0" stroke-width="1.200" fill="none"/></svg>
<!-- qq -->
<svg style="left:1187px;top:12px" width="18" height="19" viewBox="0 0 18 19"><ellipse cx="9" cy="11" rx="6.800" ry="6.500" fill="#111"/><ellipse cx="9" cy="5.500" rx="4.600" ry="4.800" fill="#111"/><ellipse cx="9" cy="13" rx="4" ry="4.300" fill="#fff"/><ellipse cx="7.400" cy="4.800" rx="1.100" ry="1.600" fill="#fff"/><ellipse cx="10.600" cy="4.800" rx="1.100" ry="1.600" fill="#fff"/><ellipse cx="9" cy="7.600" rx="2.600" ry=".9" fill="#f5a81c"/><path d="M4 9q5 2.500 10 0l.5 2q-5.500 2.500-11 0z" fill="#e2231a"/><ellipse cx="5.500" cy="17.500" rx="2.600" ry="1" fill="#f5a81c"/><ellipse cx="12.500" cy="17.500" rx="2.600" ry="1" fill="#f5a81c"/></svg>
<!-- plug -->
<svg style="left:1212px;top:13px" width="16" height="17" viewBox="0 0 16 17"><rect x="1.500" y="3" width="8" height="12.500" rx="1" fill="none" stroke="#fff" stroke-width="1.600"/><rect x="3.500" y="1" width="4" height="2" fill="#fff"/><path d="M8 5.500h6v3.500q0 2.500-2 3v3h-2v-3q-2-.5-2-3z" fill="#fff" stroke="#222" stroke-width=".6"/><path d="M9.500 2.500v3M12.500 2.500v3" stroke="#fff" stroke-width="1.300"/></svg>
<!-- signal -->
<svg style="left:1237px;top:16px" width="15" height="12" viewBox="0 0 16 14" preserveAspectRatio="none"><g fill="#fff"><rect x="0" y="11" width="2" height="2"/><rect x="3.200" y="9" width="2.200" height="4"/><rect x="6.600" y="6.500" width="2.200" height="6.500"/><rect x="10" y="3.500" width="2.200" height="9.500"/><rect x="13.400" y=".5" width="2.200" height="12.500"/></g></svg>
<!-- speaker -->
<svg style="left:1259px;top:13px" width="18" height="17" viewBox="0 0 18 17"><path d="M1 5.500h3.500l4.500-4.500v14L4.500 10.500H1z" fill="#f2f2f2"/><circle cx="12" cy="11" r="4.200" fill="#fff" stroke="#e0202a" stroke-width="1.700"/><path d="M9.300 8.300l5.400 5.400" stroke="#e0202a" stroke-width="1.700"/></svg>
<div id="clock" class="abs">10:57<br>2019/7/30</div>
<i class="sd" style="left:1351px"></i><i class="sp" style="left:1352px"></i>
</div>
</body>
</html>
